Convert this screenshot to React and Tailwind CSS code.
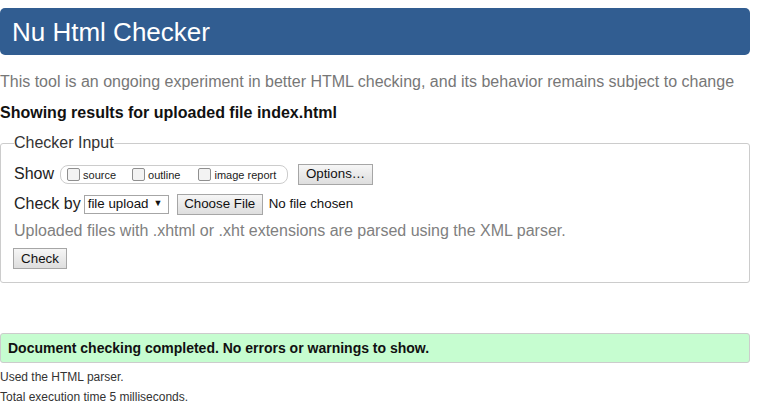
export default function App() {
  return (
    <div className="w-[767px] h-[409px] bg-white pt-2 text-[#222] font-['Liberation_Sans',Arial,sans-serif] overflow-hidden">
      <div className="w-[750px] h-[47px] bg-[#315d91] rounded-[5px] flex items-center pl-3">
        <h1 className="text-[26px] leading-none text-white">Nu Html Checker</h1>
      </div>

      <p className="mt-[17px] text-[16px] leading-5 text-[#777]">
        This tool is an ongoing experiment in better HTML checking, and its behavior remains subject to change
      </p>
      <p className="mt-[11px] text-[16px] leading-5 font-bold text-[#111]">
        Showing results for uploaded file index.html
      </p>

      <fieldset className="mt-[10px] w-[750px] h-[150px] border border-[#ccc] rounded-[3px] pl-[13px] pr-2 pt-[9px]">
        <legend className="text-[16px] leading-5 text-[#333] px-0">Checker Input</legend>

        <div className="flex items-center h-[22px] mt-[1px]">
          <span className="text-[16px] text-[#222] mr-[6px]">Show</span>
          <div className="flex items-center h-[19px] w-[228px] border border-[#ccc] rounded-[8px] pl-[6px] text-[11px] text-[#222]">
            <span className="w-[13px] h-[13px] border border-[#8f8f8f] rounded-[2px] bg-[#f3f3f3] mr-[3px]" />
            <span className="mr-[16px] mt-[3px]">source</span>
            <span className="w-[13px] h-[13px] border border-[#8f8f8f] rounded-[2px] bg-[#f3f3f3] mr-[3px]" />
            <span className="mr-[18px] mt-[3px]">outline</span>
            <span className="w-[13px] h-[13px] border border-[#8f8f8f] rounded-[2px] bg-[#f3f3f3] mr-[3px]" />
            <span className="mt-[3px]">image report</span>
          </div>
          <button className="ml-[10px] h-[21px] w-[75px] border border-[#a6a6a6] bg-gradient-to-b from-[#f6f6f6] to-[#dedede] text-[13.33px] text-[#111] leading-none">
            Options…
          </button>
        </div>

        <div className="flex items-center h-[22px] mt-[8px]">
          <span className="text-[16px] text-[#222] mr-[3px]">Check by</span>
          <div className="h-[19px] w-[85px] border border-[#a6a6a6] flex items-center pl-[3px] text-[13.33px] text-[#111]">
            <span>file upload</span>
            <span className="ml-[5px] text-[9px]">▼</span>
          </div>
          <button className="ml-[8px] h-[21px] w-[86px] border border-[#a6a6a6] bg-gradient-to-b from-[#f6f6f6] to-[#dedede] text-[13.33px] text-[#111] leading-none">
            Choose File
          </button>
          <span className="ml-[6px] text-[13.33px] text-[#111]">No file chosen</span>
        </div>

        <p className="mt-[6px] text-[16px] leading-5 text-[#808080]">
          Uploaded files with .xhtml or .xht extensions are parsed using the XML parser.
        </p>

        <button className="mt-[7px] -ml-[1px] h-[21px] w-[54px] border border-[#a6a6a6] bg-gradient-to-b from-[#f6f6f6] to-[#dedede] text-[13.33px] text-[#111] leading-none">
          Check
        </button>
      </fieldset>

      <div className="mt-[50px] w-[750px] h-[30px] border border-[#ccc] rounded-[3px] bg-[#c6fdd0] flex items-center pl-[7px]">
        <span className="text-[14px] font-bold text-[#111]">Document checking completed. No errors or warnings to show.</span>
      </div>

      <p className="mt-[7px] text-[12px] leading-[15px] text-[#333]">Used the HTML parser.</p>
      <p className="mt-[5px] text-[12px] leading-[15px] text-[#333]">Total execution time 5 milliseconds.</p>
    </div>
  );
}
